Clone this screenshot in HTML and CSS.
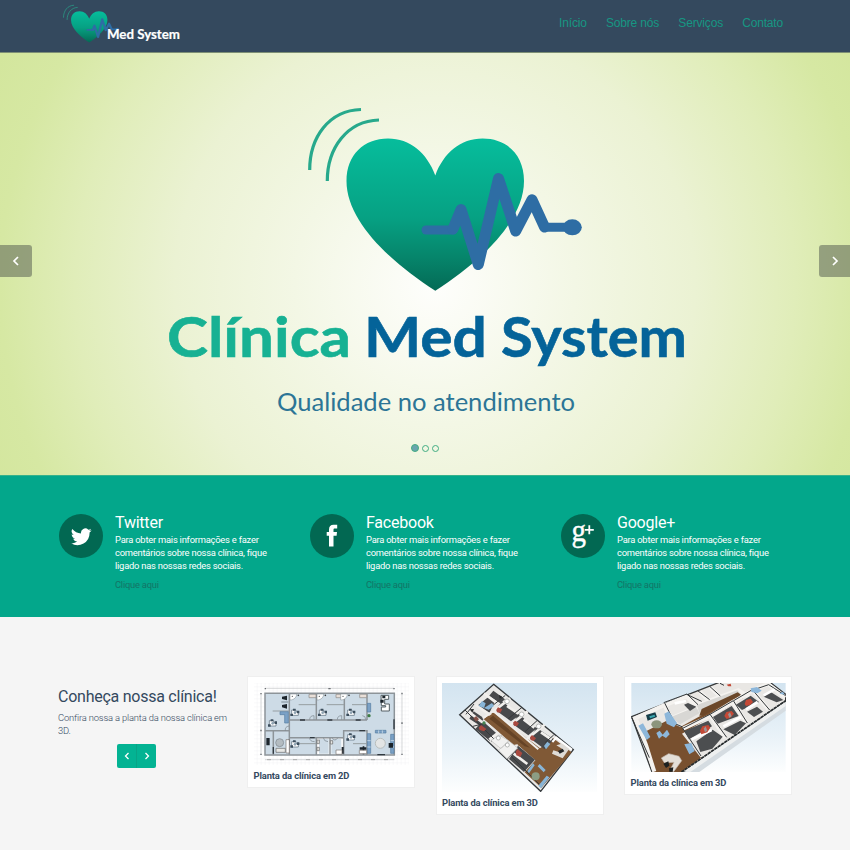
FILE: index.html
```html
<!DOCTYPE html>
<html lang="pt-BR">
<head>
<meta charset="utf-8">
<title>Clínica Med System</title>
<link rel="stylesheet" href="styles.css">
</head>
<body>
<header class="navbar">
  <a class="brand">
    <svg width="130" height="52" viewBox="60 0 130 52">
      <g transform="matrix(.205 0 0 .205 0 -17.2)">
        <use href="#logo-mark"/>
      </g>
      <text class="brand-name" x="107" y="39.2" textLength="73" lengthAdjust="spacingAndGlyphs">Med System</text>
    </svg>
  </a>
  <nav class="menu"><a>Início</a><a>Sobre nós</a><a>Serviços</a><a>Contato</a></nav>
</header>

<section class="hero">
  <svg class="slide" width="850" height="422" viewBox="0 53 850 422">
    <defs>
      <linearGradient id="heart-fill" x1="0" y1="0" x2="0" y2="1">
        <stop offset="0" stop-color="#06bd9c"/>
        <stop offset=".52" stop-color="#06a183"/>
        <stop offset=".78" stop-color="#06856b"/>
        <stop offset="1" stop-color="#046a55"/>
      </linearGradient>
      <g id="logo-mark">
        <path fill="none" stroke="#27a98c" stroke-width="3.2" d="M309.7 170C309.7 137 329 110.500 361 109.500M327.300 181C327.300 148 347 121 379 120"/>
        <path fill="url(#heart-fill)" d="M435.300 290.700C392 263 346.500 222 346.500 181C346.500 155 364 138.600 388 138.600C410 138.600 427 153 435.300 175.500C443.600 153 460.600 138.600 482.600 138.600C507 138.600 524 155 524 181C524 222 478.600 263 435.300 290.700Z"/>
        <path fill="none" stroke="#2e6da4" stroke-width="9" stroke-linecap="round" stroke-linejoin="round" d="M426 230H453"/>
        <path fill="none" stroke="#2e6da4" stroke-width="11" stroke-linecap="round" stroke-linejoin="round" d="M453 229L461 209.500L478.300 264.500L498.500 178.500L515.700 231L532 199.800L544.500 227"/>
        <path fill="none" stroke="#2e6da4" stroke-width="9" stroke-linecap="round" d="M544.500 227.300H572"/>
        <ellipse fill="#2e6da4" cx="572.300" cy="227.300" rx="9.500" ry="8"/>
      </g>
    </defs>
    <use href="#logo-mark"/>
    <g class="hero-title">
      <text fill="#17b193" stroke="#17b193" x="167" y="357" textLength="184" lengthAdjust="spacingAndGlyphs">Clínica</text>
      <text fill="#046399" stroke="#046399" x="364" y="357" textLength="123" lengthAdjust="spacingAndGlyphs">Med</text>
      <text fill="#046399" stroke="#046399" x="501" y="357" textLength="186" lengthAdjust="spacingAndGlyphs">System</text>
    </g>
    <text class="hero-sub" x="277" y="411" textLength="298" lengthAdjust="spacingAndGlyphs">Qualidade no atendimento</text>
  </svg>
  <a class="arrow prev"><svg width="8" height="10" viewBox="0 0 8 10"><path d="M6 1L2 5L6 9"/></svg></a>
  <a class="arrow next"><svg width="8" height="10" viewBox="0 0 8 10"><path d="M2 1L6 5L2 9"/></svg></a>
  <div class="dots"><i class="on"></i><i></i><i></i></div>
</section>

<section class="social">
  <article class="network">
    <span class="badge"><svg width="21" height="21" viewBox="0 0 24 24"><path fill="#fff" d="M23.600 4.900a9.700 9.700 0 0 1-2.800.8 4.900 4.900 0 0 0 2.100-2.700 9.800 9.800 0 0 1-3.100 1.200 4.900 4.900 0 0 0-8.300 4.400A13.800 13.800 0 0 1 1.500 3.500a4.900 4.900 0 0 0 1.500 6.500 4.900 4.900 0 0 1-2.200-.6v.1a4.900 4.900 0 0 0 3.900 4.800 4.900 4.900 0 0 1-2.200.1 4.900 4.900 0 0 0 4.600 3.400 9.800 9.800 0 0 1-7.100 2 13.800 13.800 0 0 0 21.200-12.300 9.800 9.800 0 0 0 2.400-2.600z"/></svg></span>
    <div class="info">
      <h3>Twitter</h3>
      <p>Para obter mais informações e fazer<br>comentários sobre nossa clínica, fique<br>ligado nas nossas redes sociais.</p>
      <a>Clique aqui</a>
    </div>
  </article>
  <article class="network">
    <span class="badge facebook"><svg width="12" height="23" viewBox="0 0 12 23"><path fill="#fff" d="M3 22.500V11.800H.7V8H3V5.700C3 2.400 4.500.8 7.600.8H11.200V4.600H9C7.800 4.600 7.500 5 7.500 6.200V8H11L10.600 11.800H7.500V22.500Z"/></svg></span>
    <div class="info">
      <h3>Facebook</h3>
      <p>Para obter mais informações e fazer<br>comentários sobre nossa clínica, fique<br>ligado nas nossas redes sociais.</p>
      <a>Clique aqui</a>
    </div>
  </article>
  <article class="network">
    <span class="badge"><svg width="44" height="44" viewBox="0 0 44 44"><text class="g-letter" x="10.500" y="27" textLength="14.500" lengthAdjust="spacingAndGlyphs">g</text><path fill="none" stroke="#fff" stroke-width="1.800" d="M28.300 11.300V20.300M23.800 15.800H32.800"/></svg></span>
    <div class="info">
      <h3>Google+</h3>
      <p>Para obter mais informações e fazer<br>comentários sobre nossa clínica, fique<br>ligado nas nossas redes sociais.</p>
      <a>Clique aqui</a>
    </div>
  </article>
</section>

<section class="gallery">
  <div class="intro">
    <h2>Conheça nossa clínica!</h2>
    <p>Confira nossa a planta da nossa clínica em<br>3D.</p>
    <div class="pager">
      <a><svg width="6" height="8" viewBox="0 0 8 10"><path d="M6 1L2 5L6 9"/></svg></a>
      <a><svg width="6" height="8" viewBox="0 0 8 10"><path d="M2 1L6 5L2 9"/></svg></a>
    </div>
  </div>

  <figure class="card">
    <svg width="155" height="82" viewBox="40 38 465 246">
      <defs>
        <pattern id="grid" width="12" height="12" patternUnits="userSpaceOnUse"><path d="M0 .5H12M.5 0V12" stroke="#ececef" stroke-width="1.500"/></pattern>
        <g id="desk">
          <path fill="#fff" stroke="#526575" stroke-width="2" d="M-10 -8H3V-2H10V8H-10Z"/>
          <path fill="#3c4e5d" d="M-6 -12H2V-6H-6ZM-14 3H-6V10H-14ZM6 -6H13V2H6Z"/>
          <circle r="4" fill="#8fa3b2"/>
        </g>
        <g id="corner">
          <path fill="#fff" stroke="#7b868d" stroke-width="1.500" d="M0 0H20C20 10 12 18 0 18Z"/>
          <circle cx="7" cy="7" r="2" fill="#555"/>
          <path fill="#e9dfd8" stroke="#8b8784" stroke-width="2" d="M57 1H78V11H57Z"/>
          <circle cx="25" cy="4" r="2.500" fill="#333"/>
        </g>
      </defs>
      <path fill="#fff" d="M40 38H505V284H40Z"/>
      <path fill="url(#grid)" d="M40 38H505V284H40Z"/>
      <path fill="#cddbe6" d="M73 69H461V253H73Z"/>
      <path fill="#fff" stroke="#aaa" d="M228 203H309V253H228Z"/>
      <path fill="#cddbe6" d="M235 206H264V250H235ZM272 206H302V250H272Z"/>
      <path fill="none" stroke="#8d9499" stroke-width="4.500" d="M73 69H461V254H73ZM146 69V254M146 149H379M227 69V149M311 69V149M379 69V149M73 181H146M98 181V254M146 202H309M227 202V254M268 202V254M309 254V181H379V254"/>
      <path stroke="#979ea2" stroke-width="3" d="M174 103H226M258 103H310M334 103H378M174 220H226M337 220H378M96 122H146"/>
      <path stroke="#c2c5c7" stroke-width="2" d="M73 54H461M61 69V253M484 69V253M73 268H461"/>
      <path stroke="#6a6e72" stroke-width="4" d="M72 55H76M458 55H462M263 55H270M61 68V72M61 178V183M61 250V254M484 67V72M484 156V161M484 250V254"/>
      <path stroke="#aaa" stroke-width="3" stroke-dasharray="12 27" d="M79 268H461"/>
      <path stroke="#303940" stroke-width="4" d="M178 149H193M260 149H275M345 149H360M460 147V177M410 253H433M145 208V224M208 202H222M98 230V250M356 181H373"/>
      <path fill="none" stroke="#7a858c" stroke-width="2" d="M207 148Q207 136 220 136V148M290 148Q290 136 303 136V148M375 148Q375 136 365 136M207 202Q207 214 222 214M248 202Q250 214 262 214M274 202Q282 216 292 202M134 181Q132 169 145 167"/>
      <use href="#corner" x="148" y="71"/><use href="#corner" x="229" y="71"/><use href="#corner" x="300" y="71"/>
      <use href="#desk" x="163" y="127"/><use href="#desk" x="246" y="127"/><use href="#desk" x="331" y="127"/><use href="#desk" x="163" y="222"/><use href="#desk" x="331" y="201"/><use href="#desk" x="96" y="159"/>
      <path fill="#1d252c" d="M124 79L139 76V90L124 86ZM124 104L139 101V115L124 111ZM77 203H87V225H77Z"/>
      <path stroke="#7d8b96" stroke-width="3" d="M122 95H143"/>
      <path fill="#7ba1c6" stroke="#547ba0" stroke-width="2" d="M118 124H143V158H132V133H118ZM380 99H390V125H380ZM380 190H390V249H380ZM450 192H460V249H450ZM404 180H436V188H404Z"/>
      <path stroke="#e2edf5" stroke-width="2" d="M380 211H390M380 230H390M450 211H460M450 230H460M414 180V189M425 180V189"/>
      <circle cx="117" cy="217" r="12" fill="#b4bcc1" stroke="#7b858c" stroke-width="2"/><circle cx="419" cy="219" r="15" fill="#e3e5e5" stroke="#b9bebd" stroke-width="3"/>
      <circle cx="385" cy="136" r="5" fill="#3d7b45"/>
      <path fill="#fff" stroke="#555f64" stroke-width="3" d="M421 75H444V87H432V101H446V122H422V110H435V106H422Z"/>
      <path fill="#1b242c" d="M425 76H434V84H425ZM419 88H429V97H419ZM444 218H457V232H444ZM357 231H377V238H357ZM366 228H371V252H366ZM303 230H309V250H303Z"/>
      <path fill="#fff" stroke="#77706d" stroke-width="2" d="M136 208H146V248H136ZM286 239H304V252H286ZM356 240H378V250H356Z"/>
      <path fill="#e8e8e5" stroke="#666" stroke-width="2" d="M106 234H134V246H106ZM229 209H236V220H229ZM229 231H236V241H229ZM269 211H276V221H269Z"/>
    </svg>
    <figcaption>Planta da clínica em 2D</figcaption>
  </figure>

  <figure class="card">
    <svg width="155" height="109" viewBox="36 38 465 327">
      <defs>
        <linearGradient id="sky" x1="0" y1="0" x2="0" y2="1"><stop offset="0" stop-color="#d3e4f0"/><stop offset=".6" stop-color="#e9f2f8"/><stop offset="1" stop-color="#fdfefe"/></linearGradient>
      </defs>
      <path fill="url(#sky)" d="M36 38H501V365H36Z"/>
      <path fill="#e9e8e6" stroke="#34383b" stroke-width="4" d="M191 42L430 238L332 363L89 133Z"/>
      <path fill="#805936" d="M161 146L190 126L330 234L370 204L425 246L334 352L284 306L316 270L267 226L257 224Z"/>
      <path fill="#654326" d="M179 145L190 136L317 243L284 231Z"/>
      <g fill="#48494b">
        <path d="M190 61L225 87L211 99L177 77ZM175 80L193 97L178 128L144 105ZM131 123L162 144L148 165L118 145ZM157 151L201 190L179 211L136 176ZM216 93L269 134L243 153L196 119ZM266 132L320 174L295 195L247 160ZM320 172L371 207L344 237L298 202ZM264 226L315 268L282 305L237 266Z"/>
      </g>
      <g fill="none" stroke="#f1efec" stroke-width="8">
        <path d="M162 69L198 96M137 104L188 139M119 127L160 158M241 84L188 125M293 123L239 165M344 163L291 206M231 107L265 130M281 147L313 172M333 186L365 208M229 247L264 220M178 208L211 182M205 236L239 208M251 250L292 281"/>
      </g>
      <path fill="none" stroke="#f1efec" stroke-width="6" d="M158 144L190 122L325 237"/>
      <path fill="#805936" d="M163 147L189 129L318 240L300 254L262 222L250 224Z"/>
      <path fill="#654326" d="M178 145L189 136L300 232L284 228Z"/>
      <path fill="none" stroke="#36393b" stroke-width="3" d="M226 75L190 104M276 111L234 146M321 151L285 184M371 194L345 217M132 101L108 132M160 160L129 168M214 197L183 213M240 216L207 241M264 231L231 267M105 119L333 347"/>
      <path fill="#f1f1f0" stroke="#bfc0be" stroke-width="2" d="M207 194L236 211L213 235L183 211ZM238 213L263 233L231 265L205 239Z"/>
      <g fill="#a9493f">
        <path d="M199 118L204 111L217 117L211 127L201 126ZM249 157L255 151L267 158L261 168L252 166ZM300 201L306 194L318 204L311 212L302 209ZM146 172L153 164L169 176L162 183L149 179ZM257 244L263 236L277 248L271 260L259 255Z"/>
        <path fill="#85534a" d="M130 144L139 137L147 147L138 154Z"/>
      </g>
      <g fill="#fff" stroke="#989b9a" stroke-width="2"><circle cx="231" cy="93" r="7"/><circle cx="275" cy="132" r="7"/><circle cx="326" cy="168" r="7"/><circle cx="205" cy="203" r="6"/><circle cx="232" cy="224" r="6"/></g>
      <path fill="#88b5d7" d="M342 227L352 214L361 221L348 237ZM292 302L309 279L314 285L297 309ZM323 288L329 281L347 299L341 306ZM325 346L350 316L358 321L333 354ZM146 107L156 92L167 99L162 113L186 98L192 107L176 118Z"/>
      <circle cx="317" cy="318" r="12" fill="#8c9d84"/>
      <path fill="#dedbd6" d="M379 225L403 218L420 232L398 264L366 250L370 240L389 246L397 236Z"/>
      <path fill="#26292a" d="M384 242L398 235L403 243L389 250ZM119 117L132 116L127 127ZM207 74L217 79L209 85Z"/>
      <circle cx="162" cy="158" r="5" fill="#478451"/>
      <path fill="none" stroke="#fff" stroke-width="6" d="M367 215L379 202L426 238"/>
    </svg>
    <figcaption>Planta da clínica em 3D</figcaption>
  </figure>

  <figure class="card">
    <svg width="155" height="89" viewBox="47 38 463 267">
      <path fill="url(#sky)" d="M47 38H510V305H47Z"/>
      <path fill="#d5dce1" d="M200 305L510 92V121L251 305Z"/>
      <path fill="#e9e7e4" stroke="#37393a" stroke-width="4" d="M48 139L321 32H458L510 72V93L197 309L109 305Z"/>
      <path fill="#78502f" d="M88 184L153 151L194 170L369 73L384 82L199 190L256 263L197 305H112L93 239Z"/>
      <path fill="none" stroke="#f4f2ef" stroke-width="12" d="M53 146L147 104L169 157M62 149L91 224L116 304M153 103L213 78L242 111L168 143M218 76L243 101M253 65L279 91M285 52L315 81M246 104L368 60L416 90M202 175L285 137L329 203M286 135L351 95L392 157M356 93L411 60L458 117M414 58L457 41L509 81"/>
      <path fill="#d8d7d4" d="M168 139L241 109L251 129L193 162ZM243 104L365 60L375 71L254 133Z"/>
      <path fill="#6b4729" d="M251 136L258 116L366 66L376 73L262 136Z"/>
      <path fill="none" stroke="#34383a" stroke-width="3" d="M147 98L178 160L201 170M144 97L214 71L247 103M213 72L258 93M246 61L282 88M282 48L314 77M313 39L325 45M201 174L283 132L333 201M283 132L353 91L395 158M354 91L410 58L462 119M409 60L459 43L510 76M201 174L256 257M48 142L101 262"/>
      <g fill="#4c4e50"><path d="M206 182L278 151L289 168L220 207ZM242 213L291 178L321 199L290 235L254 245ZM292 140L348 107L369 137L306 160ZM323 177L374 151L391 159L357 194ZM361 103L405 76L430 95L379 119ZM394 124L424 109L442 124L415 140ZM205 103L217 98L242 109L223 122ZM444 79L464 64L503 89L483 96Z"/></g>
      <path stroke="#fff" stroke-width="8" d="M228 207L288 179M323 168L376 140M391 117L426 95M444 75L477 57M177 99L211 92"/>
      <g fill="#c44936"><path d="M253 181L260 168L278 164L284 172L275 186L257 192ZM326 137L332 125L348 122L355 130L344 142L333 146ZM387 101L391 89L405 85L412 95L403 104L391 107ZM333 43L345 40L347 48L338 48Z"/></g>
      <g fill="#9b9494"><path d="M264 175L270 168L275 181L268 186ZM337 132L343 126L348 138L341 142Z"/></g>
      <path fill="#8db7da" d="M68 166L82 159L104 200L93 209ZM146 130L159 123L184 158L175 171L153 160ZM206 222L227 218L237 242L221 252ZM122 188L132 181L141 193L154 178L162 192L151 203L140 196L130 205ZM405 54L424 50L438 61L425 69L407 65ZM491 70L502 64L507 73Z"/>
      <path fill="#173e49" d="M91 134L119 126L124 140L96 151Z"/><path fill="#3aa6af" d="M101 138L117 133L118 139L103 144Z"/>
      <ellipse cx="123" cy="162" rx="16" ry="12" fill="#8c957c"/>
      <path fill="#e4dfd8" stroke="#c5bdb3" stroke-width="2" d="M137 263L159 250L190 258L198 271L182 293L174 304L163 299L175 276L146 277Z"/>
      <path fill="#1c2122" d="M143 280L158 273L161 286L151 293ZM160 294L173 291L171 304H161Z"/>
      <path fill="#eef0f0" d="M203 303L510 93V107L224 305Z"/>
      <path stroke="#252a2c" stroke-width="5" stroke-dasharray="10 2" d="M197 305L510 91"/>
    </svg>
    <figcaption>Planta da clínica em 3D</figcaption>
  </figure>
</section>
</body>
</html>
```

FILE: styles.css
```css
* { box-sizing: border-box; }
body { margin: 0; height: 850px; overflow: hidden; background: #f5f5f5; font-family: Roboto, sans-serif; color: #34495e; }
h2, h3, p, figure { margin: 0; }
svg { display: block; }

.navbar { height: 53px; padding: 0 67px 0 60px; display: flex; justify-content: space-between; background: #34495e; border-bottom: 1px solid #7d8f75; }
.brand-name { font: 700 13px "Century Gothic", Lato, sans-serif; fill: #fff; stroke: #fff; stroke-width: .2; }
.menu { display: flex; gap: 19.2px; padding-top: 16px; font: 12px/15px "Liberation Sans", Arial, sans-serif; letter-spacing: -.17px; color: #169783; }

.hero { position: relative; height: 422px; background: radial-gradient(circle at 435px 232px, #fefefc 0, #f3f7e5 140px, #ebf2d3 260px, #e0edb9 360px, #d6e8a3 435px, #d3e69d 490px); }
.hero-title { font: 700 56px "Century Gothic", Lato, sans-serif; stroke-width: .6; }
.hero-sub { font: 400 25px "Century Gothic", Lato, sans-serif; fill: #2c7596; }
.arrow { position: absolute; top: 192px; width: 32px; height: 32px; display: flex; align-items: center; justify-content: center; background: rgba(85, 92, 82, .53); }
.arrow path, .pager path { fill: none; stroke: #fff; stroke-width: 1.7; }
.prev { left: 0; border-radius: 0 3px 3px 0; }
.next { right: -1px; border-radius: 3px 0 0 3px; }
.dots { position: absolute; left: 411.4px; top: 391px; display: flex; gap: 2.6px; align-items: center; }
.dots i { width: 7px; height: 7px; border: 1px solid #42ad83; border-radius: 50%; }
.dots .on { width: 8px; height: 8px; background: #69a5ae; }

.social { height: 142px; padding: 38px 0 0 59px; display: grid; grid-template-columns: repeat(3, 251px); background: #03a78b; border-top: 1px solid #35b28b; color: #fff; }
.network { display: flex; gap: 12px; }
.badge { width: 44px; height: 44px; border-radius: 50%; background: #026852; display: flex; align-items: center; justify-content: center; }
.facebook { padding-bottom: 2px; }
.g-letter { font: 31px "Liberation Serif", serif; fill: #fff; stroke: #fff; stroke-width: .4; }
.info h3 { font-size: 16px; line-height: 18px; font-weight: 400; letter-spacing: -.22px; }
.info p { margin-top: 1px; font-size: 9.4px; line-height: 13px; letter-spacing: -.23px; white-space: nowrap; }
.info a { display: block; margin-top: 6px; font-size: 9.4px; line-height: 13px; letter-spacing: -.23px; color: #147466; }

.gallery { padding: 59px 0 0 58px; display: flex; align-items: flex-start; gap: 20.5px; }
.intro { width: 168.5px; padding-top: 10px; }
.intro h2 { font-size: 16px; line-height: 22px; font-weight: 400; letter-spacing: -.25px; white-space: nowrap; }
.intro p { margin-top: 3px; font-size: 9.4px; line-height: 13px; font-weight: 300; letter-spacing: -.16px; white-space: nowrap; }
.pager { width: 39px; height: 24px; margin: 7px auto 0 59px; display: flex; border-radius: 2px; background: #03b393; }
.pager a { flex: 1; display: flex; align-items: center; justify-content: center; }
.pager a + a { border-left: 1px solid #08a486; }
.card { width: 168px; padding: 6px 5.5px; background: #fff; border: 1px solid #efefef; }
.card figcaption { padding-top: 4px; height: 15.5px; font-size: 9.4px; line-height: 13px; font-weight: 700; letter-spacing: -.13px; white-space: nowrap; }
```
